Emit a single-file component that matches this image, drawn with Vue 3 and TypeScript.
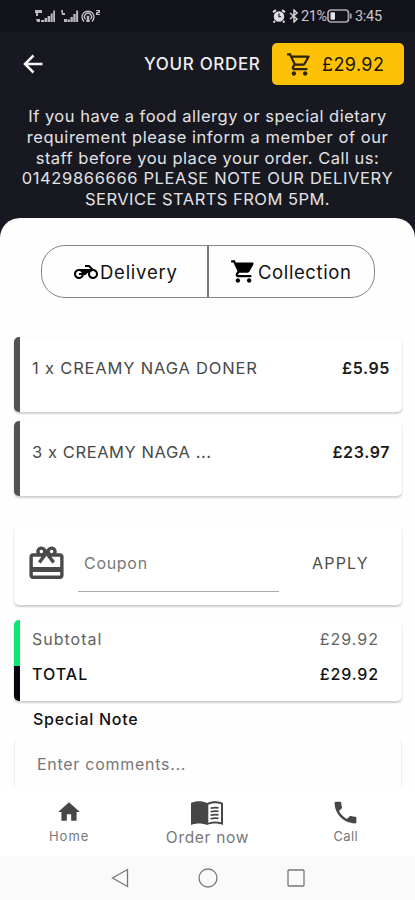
<script setup lang="ts">
import { ref } from 'vue'

interface Item { name: string; price: string; kind: string }

const cartOutline = 'M15.55 13c.75 0 1.41-.41 1.75-1.03l3.58-6.49c.37-.66-.11-1.48-.87-1.48H5.21l-.94-2H1v2h2l3.6 7.59-1.35 2.44C4.52 15.37 5.48 17 7 17h12v-2H7l1.1-2h7.45zM6.16 6h12.15l-2.76 5H8.53L6.16 6zM7 18c-1.1 0-1.99.9-1.99 2S5.9 22 7 22s2-.9 2-2-.9-2-2-2zm10 0c-1.1 0-1.99.9-1.99 2s.89 2 1.99 2 2-.9 2-2-.9-2-2-2z'
const cartFilled = 'M7 18c-1.1 0-1.99.9-1.99 2S5.9 22 7 22s2-.9 2-2-.9-2-2-2zM1 2v2h2l3.6 7.59-1.35 2.45c-.16.28-.25.61-.25.96 0 1.1.9 2 2 2h12v-2H7.42c-.14 0-.25-.11-.25-.25l.03-.12.9-1.63h7.45c.75 0 1.41-.41 1.75-1.03l3.58-6.49A1 1 0 0 0 20 4H5.21l-.94-2H1zm16 16c-1.1 0-1.99.9-1.99 2s.89 2 1.99 2 2-.9 2-2-.9-2-2-2z'
const motorcycle = 'M19.44 9.03L15.41 5H11v2h3.59l2 2H5c-2.8 0-5 2.2-5 5s2.2 5 5 5c2.46 0 4.45-1.69 4.9-4h1.65l2.77-2.77c-.21.54-.32 1.14-.32 1.77 0 2.8 2.2 5 5 5s5-2.2 5-5c0-2.65-1.97-4.77-4.56-4.97zM7.82 15C7.4 16.15 6.28 17 5 17c-1.63 0-3-1.37-3-3s1.37-3 3-3c1.28 0 2.4.85 2.82 2H5v2h2.82zM19 17c-1.66 0-3-1.34-3-3s1.34-3 3-3 3 1.34 3 3-1.34 3-3 3z'
const gift = 'M20 6h-2.18c.11-.31.18-.65.18-1 0-1.66-1.34-3-3-3-1.05 0-1.96.54-2.5 1.35l-.5.67-.5-.68C10.96 2.54 10.05 2 9 2 7.34 2 6 3.34 6 5c0 .35.07.69.18 1H4c-1.11 0-1.99.89-1.99 2L2 19c0 1.11.89 2 2 2h16c1.11 0 2-.89 2-2V8c0-1.11-.89-2-2-2zm-5-2c.55 0 1 .45 1 1s-.45 1-1 1-1-.45-1-1 .45-1 1-1zM9 4c.55 0 1 .45 1 1s-.45 1-1 1-1-.45-1-1 .45-1 1-1zm11 15H4v-2h16v2zm0-5H4V8h5.08L7 10.83 8.62 12 11 8.76l1-1.36 1 1.36L15.38 12 17 10.83 14.92 8H20v6z'
const phone = 'M6.62 10.79c1.44 2.83 3.76 5.14 6.59 6.59l2.2-2.2c.27-.27.67-.36 1.02-.24 1.12.37 2.33.57 3.57.57.55 0 1 .45 1 1V20c0 .55-.45 1-1 1C10.61 21 3 13.39 3 4c0-.55.45-1 1-1h3.5c.55 0 1 .45 1 1 0 1.25.2 2.45.57 3.57.11.35.03.74-.25 1.02l-2.2 2.2z'

const notice: string[] = [
  'If you have a food allergy or special dietary',
  'requirement please inform a member of our',
  'staff before you place your order. Call us:',
  '01429866666 PLEASE NOTE OUR DELIVERY',
  'SERVICE STARTS FROM 5PM.',
]
const items: Item[] = [
  { name: '1 x CREAMY NAGA DONER', price: '£5.95', kind: 'first' },
  { name: '3 x CREAMY NAGA ...', price: '£23.97', kind: 'second' },
]
const total = '£29.92'
const coupon = ref('')
const comments = ref('')
</script>

<template>
  <div class="screen">
    <div class="status">
      <svg class="signals" width="68" height="16" viewBox="0 0 68 16">
        <g fill="#b9b9bd">
          <path d="M1 1h7v3H4v3H2V4H1zM2 10h4v3H3zM7 11h3v2H7zM10.500 9h2.600v4h-2.600zM13.600 7h2.600v6h-2.600zM16.700 4.500h2v8.500h-2zM19.200 1.500h1.800v11.500h-1.800z" />
          <path d="M27 1h2v3h2v2h-3zM30 10h3v3h-3zM33.500 10.500h2.500v2.500h-2.500zM36.500 8h2.300v5h-2.300zM39.300 5h2.300v8h-2.300zM42.100 1.500h2v11.500h-2z" />
          <circle cx="54" cy="8" r="1.500" /><path d="M53 9h2l1 4h-4z" />
          <path d="M62 1h4v3h-2v1h2v1h-4V3h2V2h-2z" />
        </g>
        <g fill="none" stroke="#c9c9cd" stroke-width="1.300">
          <path d="M50 12.500a6 6 0 1 1 8 0M51.500 10.200a3.500 3.500 0 1 1 5 0" />
        </g>
      </svg>
      <div class="status-right">
        <svg width="14" height="14" viewBox="0 0 14 14" fill="none" stroke="#dedee1">
          <circle cx="7" cy="7.500" r="4.500" fill="#dedee1" stroke-width="1.500" /><path d="M1 3.200l3-2M13 3.200l-3-2M3 12l-1.500 1.500M11 12l1.500 1.500" stroke-width="2" /><path d="M7 4.500v3.300h2.300" stroke="#12121b" stroke-width="1.100" />
        </svg>
        <svg class="bt" width="10" height="14" viewBox="0 0 10 14" fill="none" stroke="#d4d4d8" stroke-width="1.500"><path d="M1 4l7 6-3 3V1l3 3-7 6" /></svg>
        <span class="percent">21%</span>
        <svg class="battery" width="25" height="14" viewBox="0 0 25 14"><rect x="1" y="1" width="20.500" height="12" rx="3" fill="none" stroke="#aaaaaf" stroke-width="1.700" /><rect x="3.500" y="3.300" width="4.500" height="7.400" rx="1" fill="#e2e2e5" /><rect x="23" y="4.500" width="1.600" height="5" rx=".5" fill="#aaaaaf" /></svg>
        <span class="clock">3:45</span>
      </div>
    </div>

    <header class="header">
      <svg class="back" width="20" height="20" viewBox="0 0 20 20" fill="none" stroke="#f5f5f5" stroke-width="2.500"><path d="M19.500 10H2M10.500 1.500L2 10l8.500 8.500" /></svg>
      <h1>YOUR ORDER</h1>
      <button class="basket">
        <svg width="27" height="27" viewBox="0 0 24 24"><path :d="cartOutline" /></svg>
        <span>{{ total }}</span>
      </button>
    </header>
    <p class="notice">
      <span v-for="(line, i) in notice" :key="i" :class="`line-${i + 1}`">{{ line }}</span>
    </p>

    <main class="sheet">
      <div class="toggle">
        <button class="delivery"><svg width="24" height="24" viewBox="0 0 24 24"><path :d="motorcycle" /></svg><span>Delivery</span></button>
        <button class="collection"><svg width="27" height="27" viewBox="0 0 24 24"><path :d="cartFilled" /></svg><span>Collection</span></button>
      </div>

      <section class="items">
        <article v-for="item in items" :key="item.name" class="card item">
          <span class="name" :class="item.kind">{{ item.name }}</span>
          <strong>{{ item.price }}</strong>
        </article>
      </section>

      <section class="card coupon">
        <svg width="41" height="41" viewBox="0 0 24 24"><path :d="gift" /></svg>
        <input v-model="coupon" placeholder="Coupon" />
        <button>APPLY</button>
      </section>

      <section class="card totals">
        <div class="row sub"><span>Subtotal</span><b>{{ total }}</b></div>
        <div class="row sum"><span>TOTAL</span><b>{{ total }}</b></div>
      </section>

      <h2>Special Note</h2>
      <section class="comments"><input v-model="comments" placeholder="Enter comments..." /></section>
    </main>

    <nav class="tabs">
      <a class="home"><svg width="26" height="26" viewBox="0 0 24 24"><path d="M10 20v-6h4v6h5v-8h3L12 3 2 12h3v8z" /></svg><span>Home</span></a>
      <a class="order">
        <svg width="34" height="26" viewBox="0 0 34 26">
          <path d="M1 3C6 .5 12 .5 17 3c5-2.500 11-2.500 16 0v22c-5-2-11-2-16 0-5-2-11-2-16 0z" />
          <path d="M18.300 4.800c4-1.700 8.500-1.900 12.700-.5v17.900c-4-1.200-8.700-1-12.700.6z" fill="#fff" />
          <path d="M20.500 8.300q4-1.200 8-.5M20.500 11.800q4-1.200 8-.5M20.500 15.300q4-1.200 8-.5M20.500 18.800q4-1.200 8-.5" fill="none" stroke="#464646" stroke-width="1.700" />
        </svg><span>Order now</span>
      </a>
      <a class="call"><svg width="29" height="29" viewBox="0 0 24 24"><path :d="phone" /></svg><span>Call</span></a>
    </nav>
    <div class="system">
      <svg width="18" height="20" viewBox="0 0 18 20"><path d="M16.500 1.500v17L1.500 10z" /></svg>
      <svg width="20" height="20" viewBox="0 0 20 20"><circle cx="10" cy="10" r="9" /></svg>
      <svg width="18" height="18" viewBox="0 0 18 18"><rect x="1" y="1" width="16" height="16" rx="1" /></svg>
    </div>
  </div>
</template>

<style>
body { margin: 0; background: #fff; }
</style>

<style scoped>
* { box-sizing: border-box; }
.screen { width: 415px; height: 900px; overflow: hidden; display: flex; flex-direction: column; background: #181821; font-family: Inter, sans-serif; font-size: 16px; color: #111; }
button, input { font: inherit; letter-spacing: inherit; border: 0; background: none; padding: 0; color: inherit; }
svg { display: block; flex: none; }
.status { height: 32px; flex: none; display: flex; justify-content: space-between; padding: 9px 34px 0 34px; background: #12121b; }
.status-right { display: flex; align-items: center; height: 14px; color: #c8c8cc; font: 14.5px Roboto, sans-serif; }
.bt { margin-left: 3px; }
.percent { width: 25px; margin-left: 2px; letter-spacing: -.4px; }
.battery { margin-left: 1px; }
.clock { width: 26px; margin-left: 3px; white-space: nowrap; letter-spacing: -.3px; }
.header { height: 70px; flex: none; display: flex; align-items: flex-start; padding: 11px 11px 0 23px; }
.back { margin-top: 11px; }
h1 { margin: 10px 0 0 101px; width: 117px; white-space: nowrap; font-size: 17px; line-height: 22px; font-weight: 500; letter-spacing: .65px; color: #efefef; }
.basket { margin-left: auto; width: 132px; height: 42px; border-radius: 5px; background: #fdc106; display: flex; align-items: center; gap: 9px; padding-left: 14px; color: #17150a; font-size: 18px; letter-spacing: .4px; }
.basket svg { fill: #2d2509; }
.notice { margin: 0; height: 116px; flex: none; padding-top: 4px; display: flex; flex-direction: column; align-items: center; color: #e2e2e5; font-size: 16.5px; line-height: 20.75px; }
.notice span { white-space: nowrap; letter-spacing: .5px; }
.notice .line-2 { letter-spacing: .54px; }
.notice .line-4 { letter-spacing: .64px; }
.notice .line-5 { letter-spacing: .47px; }
.sheet { height: 569px; flex: none; overflow: hidden; background: #fefefe; border-radius: 20px 20px 0 0; padding: 27px 13px 0 14px; }
.toggle { width: 334px; height: 53px; margin: 0 auto 0 27px; display: flex; border: 1px solid #858585; border-radius: 24px; font-size: 18.5px; }
.toggle button { display: flex; align-items: center; white-space: nowrap; }
.toggle .delivery { width: 167px; border-right: 2px solid #777; padding-left: 32px; gap: 2px; letter-spacing: .75px; }
.toggle .collection { flex: 1; padding-left: 21px; gap: 1px; letter-spacing: .6px; }
.items { display: flex; flex-direction: column; gap: 9px; margin-top: 39px; }
.card { border-radius: 5px; background: #fff; box-shadow: 0 2px 2px #0000002e, 0 0 2px #0000000f; }
.item { height: 75px; display: flex; justify-content: space-between; border-left: 6px solid #505254; padding: 20px 12px 0 12px; line-height: 22px; color: #484848; }
.name { font-size: 16.5px; letter-spacing: .82px; }
.name.second { letter-spacing: .58px; }
.item strong { color: #1b1b1b; font-weight: 600; letter-spacing: .6px; }
.coupon { height: 79px; margin-top: 30px; display: flex; align-items: flex-start; padding-left: 12px; color: #4d4d4d; }
.coupon svg { fill: #4a4a4a; margin-top: 17px; }
.coupon input { width: 201px; height: 52px; margin: 14px 0 0 11px; padding: 0 6px 5px; border-bottom: 1px solid #aaa; letter-spacing: .7px; }
.coupon button { margin: 26px 0 0 33px; height: 22px; letter-spacing: 1.2px; }
input::placeholder { color: #777; opacity: 1; }
.totals { height: 81px; margin-top: 15px; overflow: hidden; }
.row { display: flex; justify-content: space-between; padding: 0 23px 0 12px; line-height: 22px; letter-spacing: 1px; }
.row b { font-weight: inherit; }
.sub { height: 46px; padding-top: 8px; border-left: 6px solid #0ce772; color: #626262; }
.sum { height: 35px; border-left: 6px solid #06060e; color: #111; font-weight: 500; line-height: 17px; }
.sum b { letter-spacing: .85px; }
h2 { margin: 7px 0 0 19px; font-size: 16px; line-height: 22px; font-weight: 500; letter-spacing: .72px; }
.comments { margin-top: 9px; height: 60px; padding: 9px 22px; border: 1px solid #eee; border-top-color: #fdfdfd; border-radius: 5px; }
.comments input { height: 30px; width: 100%; letter-spacing: .72px; }
.tabs { height: 69px; flex: none; background: #fff; display: grid; grid-template-columns: repeat(3, 1fr); }
.tabs a { display: flex; flex-direction: column; align-items: center; color: #777; font-size: 13px; }
.tabs svg { fill: #464646; }
.home svg { margin-top: 12px; }
.home span, .call span { line-height: 18px; }
.home span { margin-top: 2px; letter-spacing: 1px; }
.call svg { margin-top: 11px; }
.call span { letter-spacing: .4px; }
.order svg { margin-top: 13px; }
.tabs .order { font-size: 15.5px; }
.order span { line-height: 20px; margin-top: 2px; letter-spacing: .7px; }
.system { flex: 1; background: #fafafa; display: flex; align-items: center; justify-content: center; gap: 69px; padding-bottom: 1px; }
.system svg { fill: none; stroke: #777; stroke-width: 1.3; }
</style>
